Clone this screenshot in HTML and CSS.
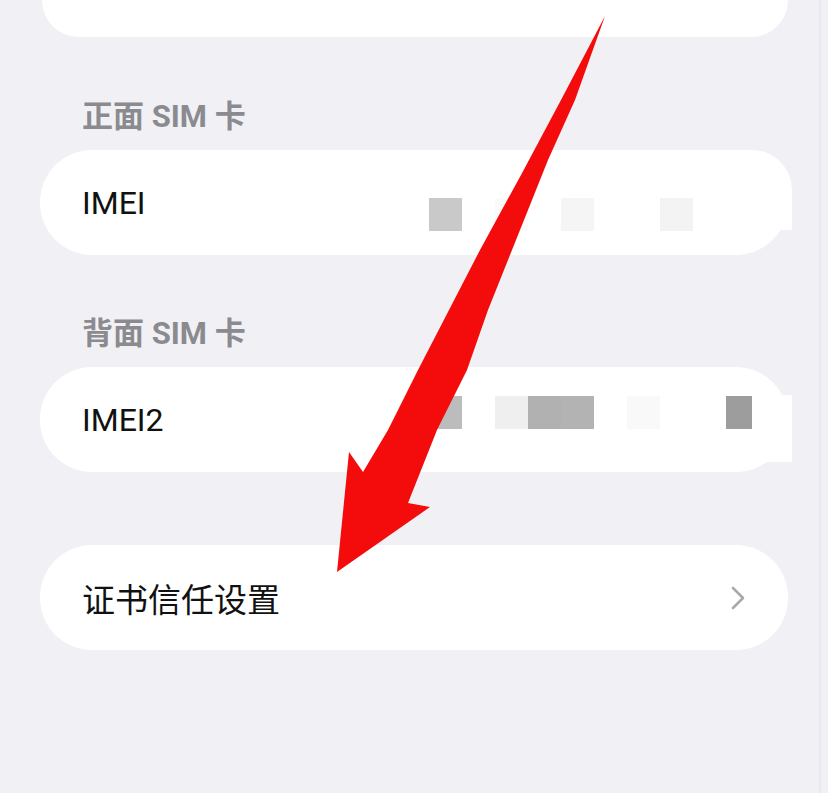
FILE: index.html
```html
<!DOCTYPE html>
<html>
<head>
    <title>SIM 信息</title>
    <link rel="stylesheet" href="styles.css">
</head>
<body>
    <div class="page">
        <div class="card card-top"></div>

        <div class="section-label">正面 SIM 卡</div>
        <div class="card row">
            <span class="row-title">IMEI</span>
            <div class="mosaic">
                <span class="px" style="left: 429px; background: #c9c9c9;"></span>
                <span class="px" style="left: 495px; background: #fafafa;"></span>
                <span class="px" style="left: 561px; background: #f5f5f5;"></span>
                <span class="px" style="left: 660px; background: #f3f3f3;"></span>
            </div>
            <span class="smear smear-a"></span>
        </div>

        <div class="section-label">背面 SIM 卡</div>
        <div class="card row">
            <span class="row-title">IMEI2</span>
            <div class="mosaic">
                <span class="px" style="left: 429px; background: #bcbcbc;"></span>
                <span class="px" style="left: 495px; background: #efefef;"></span>
                <span class="px" style="left: 528px; background: #b1b1b1;"></span>
                <span class="px" style="left: 561px; background: #b3b3b3;"></span>
                <span class="px" style="left: 627px; background: #f9f9f9;"></span>
                <span class="px" style="left: 726px; background: #9d9d9d;"></span>
            </div>
            <span class="smear smear-b"></span>
        </div>

        <div class="card row link-row">
            <span class="row-title">证书信任设置</span>
            <svg class="chevron" width="16" height="26" viewBox="0 0 16 26">
                <path d="M3 3 L13 13 L3 23" fill="none" stroke="#a9a9ad" stroke-width="2.6" stroke-linecap="round" stroke-linejoin="round"/>
            </svg>
        </div>
    </div>

    <div class="edge"></div>

    <!-- red annotation arrow -->
    <svg class="arrow" width="828" height="793" viewBox="0 0 828 793">
        <polygon fill="#f40c0c" points="605,16 575,100 548,160 512,250 488,310 467,370 437,430 408,503 430,507 337,572 349,452 363,472 388,430 418,370 449,310 480,250 521,175 561,100"/>
    </svg>
</body>
</html>
```

FILE: styles.css
```css
html, body {
    margin: 0;
    padding: 0;
}
body {
    background-color: #f1f1f5;
    font-family: Roboto, "Noto Sans CJK SC", sans-serif;
    width: 828px;
    height: 793px;
    overflow: hidden;
    position: relative;
}
.page {
    padding: 0 40px;
}
.card {
    background-color: #ffffff;
    border-radius: 52px;
}
.card-top {
    height: 37px;
    margin: 0 0 0 2px;
    border-radius: 0 0 46px 46px;
}
.section-label {
    height: 40px;
    line-height: 40px;
    margin-top: 60px;
    margin-bottom: 13px;
    padding-left: 42px;
    font-size: 31px;
    font-weight: 700;
    color: #8b8b8f;
}
.row + .section-label {
    margin-top: 59px;
}
.row {
    position: relative;
    height: 105px;
    display: flex;
    align-items: center;
    padding: 0 42px;
}
.row-title {
    font-size: 32px;
    color: #111111;
}
.link-row {
    margin-top: 73px;
    justify-content: space-between;
    padding-right: 42px;
}
.link-row .row-title {
    font-family: "Noto Sans CJK SC", sans-serif;
    font-size: 33px;
}

/* blurred-out number */
.mosaic {
    position: absolute;
    left: -40px;
    top: 48px;
    width: 828px;
    height: 33px;
}
.row:nth-of-type(5) .mosaic {
    top: 29px;
}
.px {
    position: absolute;
    top: 0;
    width: 33px;
    height: 33px;
}
.smear {
    position: absolute;
    background-color: #ffffff;
}
.smear-a {
    right: -4px;
    top: 0;
    width: 60px;
    height: 80px;
    border-radius: 0 40px 0 0;
}
.smear-b {
    right: -4px;
    top: 28px;
    width: 40px;
    height: 67px;
}

.edge {
    position: absolute;
    top: 0;
    right: 7px;
    width: 2px;
    height: 793px;
    background-color: #e9e9ed;
}
.arrow {
    position: absolute;
    top: 0;
    left: 0;
}
```
